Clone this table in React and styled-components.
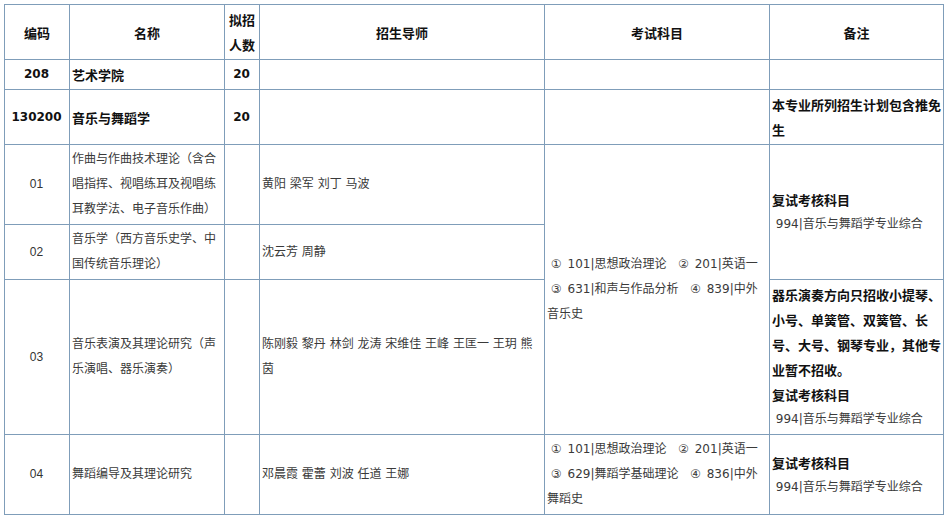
import styled, { createGlobalStyle } from "styled-components";

const GlobalStyle = createGlobalStyle`
  body {
    margin: 0;
    background: #fff;
  }
`;

const rows = [
  {
    code: "01",
    name: "作曲与作曲技术理论（含合唱指挥、视唱练耳及视唱练耳教学法、电子音乐作曲）",
    tutors: "黄阳 梁军 刘丁 马波",
  },
  {
    code: "02",
    name: "音乐学（西方音乐史学、中国传统音乐理论）",
    tutors: "沈云芳 周静",
  },
  {
    code: "03",
    name: "音乐表演及其理论研究（声乐演唱、器乐演奏）",
    tutors: "陈刚毅 黎丹 林剑 龙涛 宋维佳 王峰 王匡一 王玥 熊茵",
  },
  {
    code: "04",
    name: "舞蹈编导及其理论研究",
    tutors: "邓晨霞 霍蕾 刘波 任道 王娜",
  },
];

const gap = "\u2002";
const sep = "\u00a0\u00a0\u00a0";

const examMusic = [
  `\u00a0①${gap}101|思想政治理论${sep}②${gap}201|英语一`,
  `\u00a0③${gap}631|和声与作品分析${sep}④${gap}839|中外`,
  "音乐史",
];

const examDance = [
  `\u00a0①${gap}101|思想政治理论${sep}②${gap}201|英语一`,
  `\u00a0③${gap}629|舞蹈学基础理论${sep}④${gap}836|中外`,
  "舞蹈史",
];

const Retest = () => (
  <>
    <Strong>复试考核科目</Strong>
    <Line>{"\u00a0994|音乐与舞蹈学专业综合"}</Line>
  </>
);

const Exam = ({ lines }) => (
  <>
    {lines.map((l, i) => (
      <Line key={i}>{l}</Line>
    ))}
  </>
);

const App = () => {
  return (
    <Page>
      <GlobalStyle />
      <Table>
        <colgroup>
          <col style={{ width: 65 }} />
          <col style={{ width: 155 }} />
          <col style={{ width: 35 }} />
          <col style={{ width: 285 }} />
          <col style={{ width: 225 }} />
          <col style={{ width: 174 }} />
        </colgroup>
        <thead>
          <tr>
            <Th>编码</Th>
            <Th>名称</Th>
            <Th>拟招人数</Th>
            <Th>招生导师</Th>
            <Th>考试科目</Th>
            <Th>备注</Th>
          </tr>
        </thead>
        <tbody>
          <tr>
            <Td $align="center">
              <Num>208</Num>
            </Td>
            <Td>
              <Strong>艺术学院</Strong>
            </Td>
            <Td $align="center">
              <Num>20</Num>
            </Td>
            <Td />
            <Td />
            <Td />
          </tr>
          <tr>
            <Td $align="center">
              <Num>130200</Num>
            </Td>
            <Td>
              <Strong>音乐与舞蹈学</Strong>
            </Td>
            <Td $align="center">
              <Num>20</Num>
            </Td>
            <Td />
            <Td />
            <Td $tight>
              <Strong>本专业所列招生计划包含推免生</Strong>
            </Td>
          </tr>
          <tr>
            <Td $align="center">
              <Code>{rows[0].code}</Code>
            </Td>
            <Td>{rows[0].name}</Td>
            <Td />
            <Td>{rows[0].tutors}</Td>
            <Td rowSpan={3}>
              <Exam lines={examMusic} />
            </Td>
            <Td rowSpan={2} $tight>
              <Retest />
            </Td>
          </tr>
          <tr>
            <Td $align="center">
              <Code>{rows[1].code}</Code>
            </Td>
            <Td>{rows[1].name}</Td>
            <Td />
            <Td>{rows[1].tutors}</Td>
          </tr>
          <tr>
            <Td $align="center">
              <Code>{rows[2].code}</Code>
            </Td>
            <Td>{rows[2].name}</Td>
            <Td />
            <Td>{rows[2].tutors}</Td>
            <Td $tight>
              <Strong>
                器乐演奏方向只招收小提琴、小号、单簧管、双簧管、长号、大号、钢琴专业，其他专业暂不招收。
              </Strong>
              <Retest />
            </Td>
          </tr>
          <tr>
            <Td $align="center">
              <Code>{rows[3].code}</Code>
            </Td>
            <Td>{rows[3].name}</Td>
            <Td />
            <Td>{rows[3].tutors}</Td>
            <Td>
              <Exam lines={examDance} />
            </Td>
            <Td $tight>
              <Retest />
            </Td>
          </tr>
        </tbody>
      </Table>
    </Page>
  );
};

export default App;

const Page = styled.div`
  padding: 4px 0 0 4px;
`;

const Table = styled.table`
  width: 940px;
  table-layout: fixed;
  border-collapse: collapse;
  font-family: "DejaVu Sans", "Noto Sans CJK SC", sans-serif;
  font-size: 12px;
  line-height: 25px;
  color: #3a3a3a;
`;

const Th = styled.th`
  border: 1px solid #7f9db9;
  padding: 2px;
  font-size: 13px;
  font-weight: bold;
  color: #111;
  text-align: center;
  vertical-align: middle;
  font-family: "Noto Sans CJK SC", sans-serif;
`;

const Td = styled.td`
  border: 1px solid #7f9db9;
  padding: ${(props) => (props.$tight ? "2px 1px 2px 2px" : "2px 3px 2px 2px")};
  text-align: ${(props) => props.$align || "left"};
  vertical-align: middle;
  word-break: normal;
  line-break: strict;
`;

const Strong = styled.div`
  font-family: "Noto Sans CJK SC", sans-serif;
  font-size: 13px;
  font-weight: bold;
  color: #111;
`;

const Num = styled.span`
  font-family: "DejaVu Sans", sans-serif;
  font-size: 12px;
  font-weight: bold;
  color: #111;
`;

const Code = styled.span`
  font-family: "Liberation Sans", sans-serif;
  font-size: 12px;
  color: #333;
`;

const Line = styled.div`
  white-space: nowrap;
`;
